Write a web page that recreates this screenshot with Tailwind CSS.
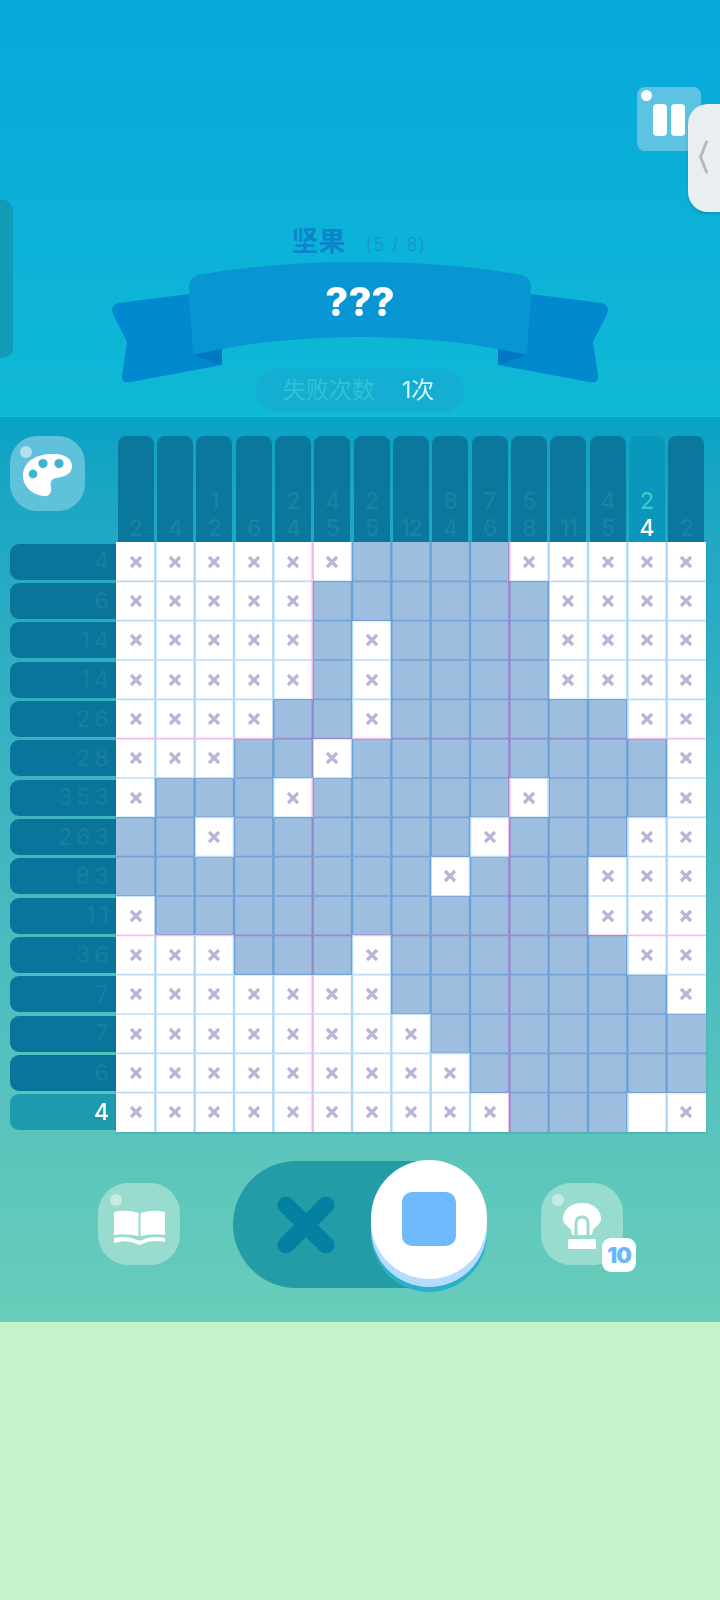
<!DOCTYPE html>
<html lang="zh">
  <head>
    <meta charset="UTF-8" />
    <meta name="viewport" content="width=device-width, initial-scale=1.0" />
    <title>坚果</title>
    <script src="https://cdn.jsdelivr.net/npm/@tailwindcss/browser@4"></script>
  </head>
  <body class="w-[720px] h-[1600px] overflow-hidden bg-[#c4f2c9] font-['Inter','Noto_Sans_CJK_SC',sans-serif]">
    <!-- Top: title and ribbon -->
    <section class="relative h-[417px] bg-linear-to-b from-[#07a8da] to-[#10b9d5] flex flex-col items-center pt-[226px]">
      <div class="absolute left-0 top-[200px] w-[13px] h-[158px] rounded-r-[10px] bg-[#109cb6]"></div>

      <!-- Pause -->
      <div class="absolute left-[637px] top-[87px] w-[64px] h-[64px] rounded-[8px] bg-[#5cc3e3]">
        <div class="absolute left-[4px] top-[3px] w-[11px] h-[11px] rounded-full bg-white"></div>
        <div class="absolute left-[16px] top-[17px] flex gap-[4px]">
          <div class="w-[14px] h-[32px] rounded-[4px] bg-white"></div>
          <div class="w-[14px] h-[32px] rounded-[4px] bg-white"></div>
        </div>
      </div>
      <!-- Side handle -->
      <div class="absolute left-[688px] top-[104px] w-[32px] h-[108px] rounded-l-[20px] bg-[#e9eef0] shadow-[0_2px_3px_rgba(0,80,120,0.25)]">
        <svg class="absolute left-[9px] top-[36px]" width="14" height="34" viewBox="0 0 14 34" fill="none">
          <path d="M9.5 2 L3.5 17 L9.5 32" stroke="#b5b9bb" stroke-width="3" stroke-linecap="round" stroke-linejoin="round" />
        </svg>
      </div>

      <div class="flex items-end h-[32px] -ml-[2px]">
        <span class="text-[27px] leading-[32px] font-bold text-[#0a85cc]">坚果</span>
        <span class="text-[18px] leading-[27px] ml-[20px] font-light tracking-[1.5px] text-[#1c8ecf]">(5 / 8)</span>
      </div>

      <!-- Ribbon -->
      <div class="relative w-[720px] h-[125px] mt-[4px]">
        <svg class="absolute left-0 top-0" width="720" height="125" viewBox="0 0 720 125">
          <path d="M189 32 L119 41 Q110 43 113 52 L127 80 L122 113 Q121 122 131 120 L222 103 L222 80 L193 80 Z" fill="#0288cf" />
          <path d="M531 32 L601 41 Q610 43 607 52 L593 80 L598 113 Q599 122 589 120 L498 103 L498 80 L527 80 Z" fill="#0288cf" />
          <path d="M193 93 L222 86 L222 103 Z" fill="#0278c4" />
          <path d="M527 93 L498 86 L498 103 Z" fill="#0278c4" />
          <path d="M189 24 Q189 16 198 13 Q270 0 360 0 Q450 0 522 13 Q531 16 531 24 L527 93 Q450 75 360 75 Q270 75 193 93 Z" fill="#0795d3" />
        </svg>
        <div class="absolute inset-x-0 top-[15px] text-center text-[40px] leading-[50px] font-extrabold text-white">???</div>
      </div>

      <div class="flex items-center w-[208px] h-[43px] -mt-[18px] pl-[27px] rounded-full bg-[#14aed3]">
        <span class="text-[23px] text-[#2fc4d2]">失败次数</span>
        <span class="text-[23px] ml-[27px] text-[#d8f5f5]">1次</span>
      </div>
    </section>

    <!-- Board and tools -->
    <section class="h-[905px] bg-linear-to-b from-[#08a2c5] to-[#68cdba]">
      <div class="flex pt-[19px] pl-[10px]">
        <div class="w-[106px] shrink-0">
          <!-- Palette -->
          <div class="h-[106px]">
            <div class="relative w-[75px] h-[75px] rounded-[27px] bg-[#60c1da]">
              <div class="absolute left-[10px] top-[10px] w-[12px] h-[12px] rounded-full bg-[#b5dfea]"></div>
              <svg class="absolute left-[13px] top-[17px]" width="50" height="45" viewBox="0 0 50 45">
                <path d="M30 1 C42 0 50 7 49 14 C48 22 40 24 33 25 C28 26 27 29 28 34 C29 40 26 44 20 43 C8 41 0 33 0 23 C0 9 12 1 30 1 Z" fill="#fff" />
                <circle cx="20" cy="10.5" r="4.6" fill="#3db4d3" />
                <circle cx="36" cy="10.5" r="4.6" fill="#3db4d3" />
                <circle cx="10" cy="21" r="4.4" fill="#3db4d3" />
              </svg>
            </div>
          </div>
          <div id="rows" class="grid grid-rows-15 h-[590px]"></div>
        </div>
        <div class="w-[590px] shrink-0">
          <div id="cols" class="grid grid-cols-15 h-[106px]"></div>
          <div class="relative w-[590px] h-[590px] bg-white shadow-[0_1px_2px_rgba(0,80,100,0.25)]">
            <div id="grid" class="grid grid-cols-15 grid-rows-15 w-full h-full"></div>
            <svg id="lines" class="absolute inset-0 mix-blend-multiply" width="590" height="590"></svg>
          </div>
        </div>
      </div>

      <!-- Tools -->
      <div class="flex items-center mt-[26px] pl-[98px] h-[132px]">
        <div class="relative w-[82px] h-[82px] rounded-[30px] bg-[#98dcd0]">
          <div class="absolute left-[12px] top-[11px] w-[12px] h-[12px] rounded-full bg-[#c5ebe4]"></div>
          <svg class="absolute left-[15px] top-[27px]" width="53" height="36" viewBox="0 0 53 36" fill="#fff">
            <path d="M1 2 Q14 -1 25.5 3 L25.5 26 Q14 23 1 25 Z" />
            <path d="M52 2 Q39 -1 27.5 3 L27.5 26 Q39 23 52 25 Z" />
            <path d="M1 28 Q14 25 24 30 Q26 31 29 30 Q39 25 52 28 L52 32 Q39 29 29 34 Q26 36 24 34 Q14 29 1 33 Z" />
          </svg>
        </div>

        <!-- Mode toggle -->
        <div class="relative w-[254px] h-[127px] ml-[53px] rounded-full bg-[#249ca6]">
          <svg class="absolute left-[44px] top-[35px]" width="58" height="58" viewBox="0 0 58 58">
            <path d="M9 9 L49 49 M49 9 L9 49" stroke="#0480a3" stroke-width="17" stroke-linecap="round" />
          </svg>
          <div class="absolute left-[138px] top-[12px] w-[116px] h-[119px] rounded-full bg-[#2ab0c9]"></div>
          <div class="absolute left-[138px] top-[7px] w-[116px] h-[119px] rounded-full bg-[#b5dcfc]"></div>
          <div class="absolute left-[138px] top-[-1px] w-[116px] h-[119px] rounded-full bg-white flex items-center justify-center">
            <div class="w-[54px] h-[54px] rounded-[10px] bg-[#6fbaff]"></div>
          </div>
        </div>

        <div class="relative w-[82px] h-[82px] ml-[54px] rounded-[30px] bg-[#98dcd0]">
          <div class="absolute left-[11px] top-[11px] w-[12px] h-[12px] rounded-full bg-[#c5ebe4]"></div>
          <svg class="absolute left-[22px] top-[20px]" width="38" height="46" viewBox="0 0 38 46">
            <path d="M19 0 C31 0 38 7 38 16 C38 21 33 23 30 27 L29 32 L9 32 L8 27 C5 23 0 21 0 16 C0 7 7 0 19 0 Z" fill="#fff" />
            <path d="M13 32 L13 21 Q13 14 19 14 Q25 14 25 21 L25 32" fill="none" stroke="#98dcd0" stroke-width="3" />
            <rect x="5" y="36" width="28" height="10" rx="1.5" fill="#fff" />
          </svg>
          <div class="absolute left-[61px] top-[55px] w-[34px] h-[34px] rounded-[9px] bg-white flex items-center justify-center text-[22px] font-black tracking-[-1px] text-[#6ab8f8]">10</div>
        </div>
      </div>
    </section>

    <script>
      const rowClues = ["4", "6", "14", "14", "26", "28", "353", "263", "83", "11", "36", "7", "7", "6", "4"];
      const colClues = [["2"], ["4"], ["1", "2"], ["6"], ["2", "4"], ["4", "5"], ["2", "5"], ["12"], ["8", "4"], ["7", "6"], ["5", "8"], ["11"], ["4", "5"], ["2", "4"], ["2"]];
      // x = crossed, o = filled, _ = empty
      const cells = [
        "xxxxxxooooxxxxx",
        "xxxxxooooooxxxx",
        "xxxxxoxooooxxxx",
        "xxxxxoxooooxxxx",
        "xxxxooxooooooxx",
        "xxxooxoooooooox",
        "xoooxoooooxooox",
        "ooxooooooxoooxx",
        "ooooooooxoooxxx",
        "xoooooooooooxxx",
        "xxxoooxooooooxx",
        "xxxxxxxooooooox",
        "xxxxxxxxooooooo",
        "xxxxxxxxxoooooo",
        "xxxxxxxxxxooo_x",
      ];

      const rowsEl = document.getElementById("rows");
      rowClues.forEach((clue, i) => {
        const active = i === 14;
        const el = document.createElement("div");
        el.className = active
          ? "self-center h-[36px] rounded-l-[9px] bg-[#1e9aad] flex items-center justify-end pr-[3px] text-[23px] font-medium tracking-[4px] text-white"
          : "self-center h-[36px] rounded-l-[9px] bg-[#0a759b] flex items-center justify-end pr-[3px] text-[23px] font-medium tracking-[4px] text-[#187da0]";
        el.textContent = clue;
        rowsEl.appendChild(el);
      });

      const colsEl = document.getElementById("cols");
      colClues.forEach((clue, i) => {
        const active = i === 13;
        const el = document.createElement("div");
        el.className = active
          ? "justify-self-center w-[36px] h-[106px] rounded-t-[8px] bg-[#0997bb] flex flex-col justify-end items-center text-[23px] leading-[27px] font-medium"
          : "justify-self-center w-[36px] h-[106px] rounded-t-[8px] bg-[#0a789d] flex flex-col justify-end items-center text-[23px] leading-[27px] font-medium tracking-[-1px] text-[#1a82a4]";
        clue.forEach((n, j) => {
          const s = document.createElement("span");
          if (active) s.className = j === 0 ? "text-[#3fc6c9]" : "text-white";
          s.textContent = n;
          el.appendChild(s);
        });
        colsEl.appendChild(el);
      });

      const cross = `<svg width="14" height="14" viewBox="0 0 14 14"><path d="M2 2 L12 12 M12 2 L2 12" stroke="#b9b5d9" stroke-width="3.2" /></svg>`;
      const gridEl = document.getElementById("grid");
      cells.forEach((row) => {
        [...row].forEach((c) => {
          const el = document.createElement("div");
          el.className = c === "o" ? "bg-[#9dbede]" : "bg-white flex items-center justify-center";
          if (c === "x") el.innerHTML = cross;
          gridEl.appendChild(el);
        });
      });

      // grid lines, every fifth one pink
      let lines = "";
      for (let i = 1; i < 15; i++) {
        const p = (i * 590) / 15;
        const vColor = i % 5 === 0 ? "#f7b4ee" : "#aed8f8";
        const hColor = i % 5 === 0 ? "#f7bcee" : "#bcdcf8";
        lines += `<line x1="${p}" y1="0" x2="${p}" y2="590" stroke="${vColor}" stroke-width="2.4" />`;
        lines += `<line x1="0" y1="${p}" x2="590" y2="${p}" stroke="${hColor}" stroke-width="1.6" />`;
      }
      document.getElementById("lines").innerHTML = lines;
    </script>
  </body>
</html>
